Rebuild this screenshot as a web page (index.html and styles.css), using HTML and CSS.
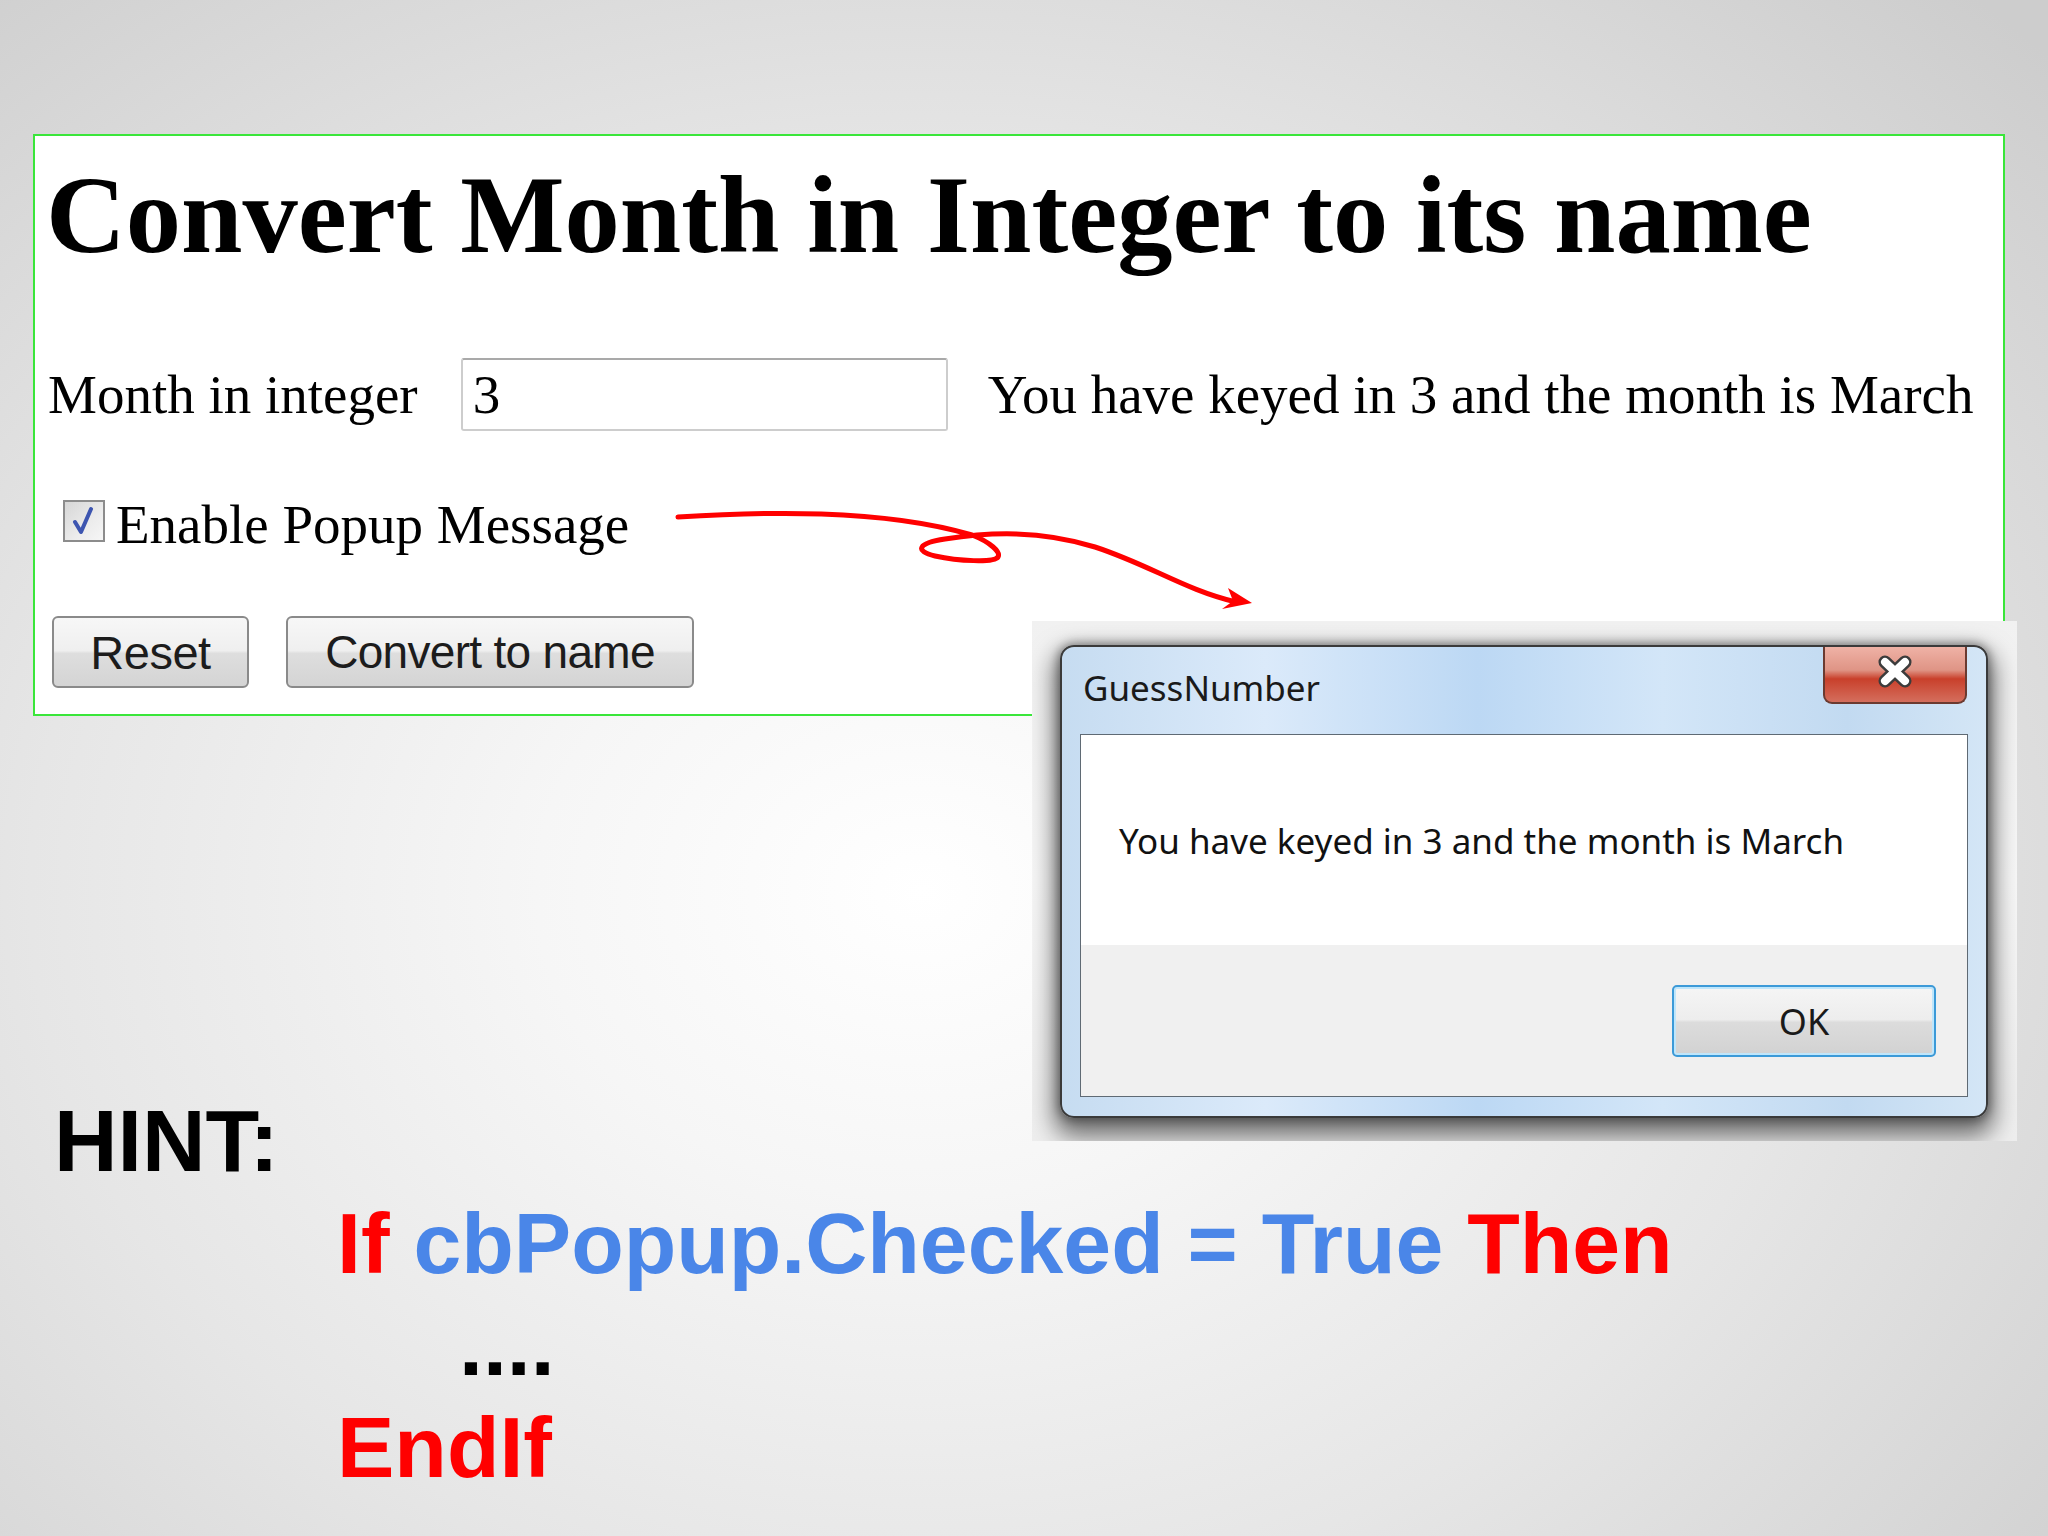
FILE: index.html
```html
<!DOCTYPE html>
<html lang="en">
<head>
<meta charset="utf-8">
<title>Convert Month in Integer to its name</title>
<link rel="stylesheet" href="styles.css">
</head>
<body>
<div class="slide">
  <section class="demo">
    <h1 class="demo-title">Convert Month in Integer to its name</h1>
    <div class="row row-input">
      <span class="label">Month in integer</span>
      <div class="textbox">3</div>
      <span class="result">You have keyed in 3 and the month is March</span>
    </div>
    <div class="row row-check">
      <span class="checkbox">
        <svg viewBox="0 0 36 36" width="36" height="36"><path d="M9 19 L15 29 L25 6" fill="none" stroke="#3d55b0" stroke-width="4" stroke-linecap="round" stroke-linejoin="round"/></svg>
      </span>
      <span class="check-label">Enable Popup Message</span>
    </div>
    <div class="row row-buttons">
      <button class="btn btn-reset">Reset</button>
      <button class="btn btn-convert">Convert to name</button>
    </div>
  </section>

  <svg class="arrow" viewBox="660 490 620 130" width="620" height="130">
    <path d="M678 517 C 760 512, 880 508, 972 535 C 990 542, 1001 552, 998 557 C 994 563, 958 561, 935 556 C 914 551, 918 543, 945 539 C 990 532, 1040 530, 1095 547 C 1150 565, 1185 590, 1236 602" fill="none" stroke="#ff0000" stroke-width="5" stroke-linecap="round"/>
    <polygon points="1252,603 1228,588 1233,601 1222,609" fill="#ff0000"/>
  </svg>

  <div class="dialog-shot">
    <div class="window">
      <div class="titlebar">
        <span class="win-title">GuessNumber</span>
        <div class="close">
          <svg viewBox="0 0 40 34" width="40" height="34">
            <path d="M10 7 L30 26 M30 7 L10 26" stroke="#3c3c3c" stroke-width="13" stroke-linecap="round"/>
            <path d="M10 7 L30 26 M30 7 L10 26" stroke="#ffffff" stroke-width="8" stroke-linecap="round"/>
          </svg>
        </div>
      </div>
      <div class="panel">
        <div class="msg">You have keyed in 3 and the month is March</div>
        <div class="panel-footer">
          <button class="ok">OK</button>
        </div>
      </div>
    </div>
  </div>

  <div class="hint">
    <div class="hint-label">HINT:</div>
    <div class="code"><span class="kw">If</span> <span class="id">cbPopup.Checked = True</span> <span class="kw">Then</span></div>
    <div class="code dots">....</div>
    <div class="code"><span class="kw">EndIf</span></div>
  </div>
</div>
</body>
</html>
```

FILE: styles.css
```css
html, body {
  margin: 0;
  padding: 0;
}

body {
  width: 2048px;
  height: 1536px;
  overflow: hidden;
}

.slide {
  position: relative;
  width: 2048px;
  height: 1536px;
  overflow: hidden;
  background: radial-gradient(ellipse 75% 80% at 45% 58%, #ffffff 0%, #f6f6f6 25%, #e6e6e6 58%, #cdcdcd 100%);
  display: flex;
  flex-direction: column;
}

/* ---------- green demo box ---------- */
.demo {
  box-sizing: border-box;
  margin: 134px 0 0 33px;
  width: 1972px;
  height: 582px;
  border: 2px solid #3ae63a;
  background: #ffffff;
  padding-top: 19px;
  font-family: "Liberation Serif", "Times New Roman", serif;
  color: #000;
}

.demo-title {
  margin: 0;
  padding-left: 11px;
  font-family: "Liberation Serif", "Times New Roman", serif;
  font-weight: 700;
  font-size: 110.5px;
  line-height: 120px;
  white-space: nowrap;
}

.row {
  display: flex;
}

.row-input {
  margin-top: 83px;
  height: 73px;
  align-items: center;
  padding-left: 13px;
  font-size: 55px;
  line-height: 73px;
  white-space: nowrap;
}

.label {
  margin-right: 43px;
}

.textbox {
  box-sizing: border-box;
  width: 487px;
  height: 73px;
  border: 2px solid #cdcdcd;
  border-top-color: #a9a9a9;
  border-radius: 3px;
  padding-left: 10px;
  line-height: 69px;
  margin-right: 40px;
  background: #fff;
}

.row-check {
  margin-top: 71px;
  height: 42px;
  padding-left: 28px;
  align-items: flex-start;
  font-size: 55px;
  line-height: 46px;
  white-space: nowrap;
}

.checkbox {
  box-sizing: border-box;
  width: 42px;
  height: 42px;
  border: 2px solid #8c8c8c;
  background: linear-gradient(135deg, #d6d6d6 0%, #ececec 60%, #f6f6f6 100%);
  display: flex;
  align-items: center;
  justify-content: center;
  margin-top: -2px;
}

.check-label {
  margin-left: 11px;
}

.row-buttons {
  margin-top: 72px;
  padding-left: 17px;
  gap: 37px;
}

.btn {
  box-sizing: border-box;
  height: 72px;
  border: 2px solid #8a8a8a;
  border-radius: 6px;
  background: linear-gradient(#f7f7f7 0%, #efefef 48%, #dedede 52%, #d4d4d4 100%);
  font-family: "Liberation Sans", Arial, sans-serif;
  font-size: 46px;
  color: #1c1c1c;
  padding: 0;
  letter-spacing: -0.5px;
}

.btn-reset {
  width: 197px;
  font-size: 47px;
}

.btn-convert {
  width: 408px;
  letter-spacing: -0.7px;
}

/* ---------- annotation arrow ---------- */
.arrow {
  position: absolute;
  left: 660px;
  top: 490px;
  pointer-events: none;
}

/* ---------- dialog screenshot ---------- */
.dialog-shot {
  position: absolute;
  left: 1032px;
  top: 621px;
  width: 985px;
  height: 520px;
  overflow: hidden;
  background: linear-gradient(180deg, #f1f1f1 0%, #f8f8f8 50%, #eeeeee 100%);
}

.window {
  box-sizing: border-box;
  margin: 24px 0 0 28px;
  width: 928px;
  height: 473px;
  border: 2px solid #3a3a3a;
  border-radius: 14px;
  background: linear-gradient(90deg, #c6dcf1 0%, #dbeafa 22%, #bcd8f4 45%, #d3e6f8 65%, #c2daf1 85%, #d4e6f6 100%);
  box-shadow: 0 12px 24px 6px rgba(0, 0, 0, 0.55), 0 0 10px 2px rgba(0, 0, 0, 0.35);
  display: flex;
  flex-direction: column;
  font-family: "Noto Sans", "Open Sans", sans-serif;
}

.titlebar {
  height: 87px;
  display: flex;
  justify-content: space-between;
  align-items: flex-start;
}

.win-title {
  padding: 21px 0 0 21px;
  font-size: 35px;
  line-height: 40px;
  color: #1a1a1a;
  letter-spacing: 0;
}

.close {
  box-sizing: border-box;
  width: 144px;
  height: 57px;
  margin-right: 19px;
  border: 2px solid #6b3a30;
  border-top: none;
  border-radius: 0 0 9px 9px;
  background: linear-gradient(180deg, #efb2a6 0%, #df9485 42%, #c9402b 58%, #d46e5d 100%);
  display: flex;
  align-items: center;
  justify-content: center;
  padding-bottom: 6px;
}

.panel {
  box-sizing: border-box;
  margin: 0 18px;
  height: 363px;
  border: 1px solid #5f6a74;
  background: #f0f0f0;
  display: flex;
  flex-direction: column;
}

.msg {
  box-sizing: border-box;
  height: 210px;
  background: #ffffff;
  padding: 86px 0 0 38px;
  font-size: 35px;
  line-height: 40px;
  color: #111;
  letter-spacing: 0;
  white-space: nowrap;
}

.panel-footer {
  flex: 1;
  display: flex;
  justify-content: flex-end;
  align-items: flex-start;
  padding: 40px 31px 0 0;
}

.ok {
  box-sizing: border-box;
  width: 264px;
  height: 72px;
  border: 2px solid #3c9ad8;
  border-radius: 5px;
  background: linear-gradient(#f5f5f5 0%, #ededed 48%, #dcdcdc 52%, #d2d2d2 100%);
  box-shadow: inset 0 0 0 2px #bfe6fb;
  font-family: "Noto Sans", "Open Sans", sans-serif;
  font-size: 36px;
  color: #1a1a1a;
  padding: 0;
}

/* ---------- hint ---------- */
.hint {
  margin-top: 374px;
  font-family: "Liberation Sans", Arial, sans-serif;
  font-weight: 700;
  line-height: 102px;
  white-space: nowrap;
}

.hint-label {
  padding-left: 54px;
  font-size: 88px;
  color: #000;
}

.code {
  padding-left: 337px;
  font-size: 86px;
}

.kw {
  color: #ff0000;
}

.id {
  color: #4a86e8;
}

.dots {
  padding-left: 459px;
  color: #000;
}
```
